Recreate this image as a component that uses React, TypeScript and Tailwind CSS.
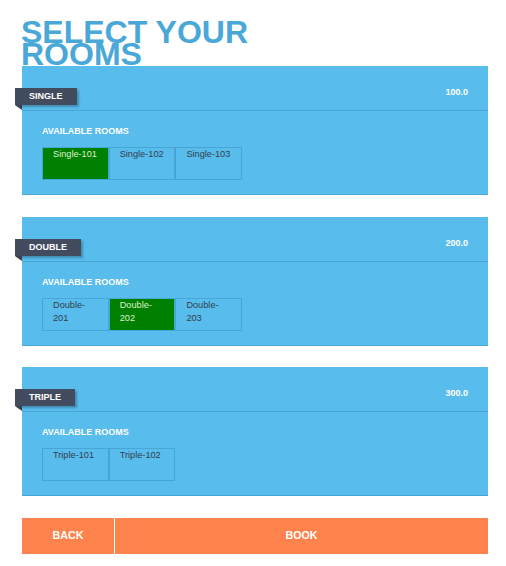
import React from "react";

type Room = { name: string; selected?: boolean };
type Cat = { tag: string; price: string; rooms: Room[] };

const cats: Cat[] = [
  {
    tag: "SINGLE",
    price: "100.0",
    rooms: [{ name: "Single-101", selected: true }, { name: "Single-102" }, { name: "Single-103" }],
  },
  {
    tag: "DOUBLE",
    price: "200.0",
    rooms: [{ name: "Double-201" }, { name: "Double-202", selected: true }, { name: "Double-203" }],
  },
  {
    tag: "TRIPLE",
    price: "300.0",
    rooms: [{ name: "Triple-101" }, { name: "Triple-102" }],
  },
];

function Panel({ cat }: { cat: Cat }) {
  return (
    <div className="bg-[#58bcec] border-b border-[#47a6d6] mb-[21.5px]">
      <div className="relative h-[45px] border-b border-[#47a6d6] flex justify-end">
        <div className="absolute left-[-7px] top-[22px]">
          <div className="h-[17px] px-[14px] flex items-center bg-[#434c5e] text-white font-bold text-[9px] leading-none shadow-[2px_2px_2px_rgba(0,0,0,0.25)]">
            {cat.tag}
          </div>
          <div className="w-0 h-0 border-t-[5px] border-t-[#39404f] border-l-[7px] border-l-transparent" />
        </div>
        <div className="pt-[20px] pr-[20px] text-white font-bold text-[9px] leading-[12px]">{cat.price}</div>
      </div>
      <div className="pl-[20px] pt-[14px] pb-[14px]">
        <div className="text-white font-bold text-[9px] leading-[12px] mb-[10px]">AVAILABLE ROOMS</div>
        <div className="flex">
          {cat.rooms.map((r) => (
            <div
              key={r.name}
              className={
                "w-[66.7px] h-[33px] border pl-[10px] pr-[9.5px] text-[9.2px] leading-[13px] " +
                (r.selected
                  ? "bg-[#008000] border-[#47a6d6] text-[#dff0cc]"
                  : "border-[#47a6d6] text-[#33404d]")
              }
            >
              {r.name}
            </div>
          ))}
        </div>
      </div>
    </div>
  );
}

export default function App() {
  return (
    <div
      className="w-[506px] min-h-[566px] bg-white"
      style={{ fontFamily: '"Liberation Sans", Arial, sans-serif' }}
    >
      <div className="ml-[22px] w-[466px] pt-[21px]">
        <h1 className="text-[32px] leading-[22px] font-bold text-[#4aa8d8] mb-[1px] -ml-[1px]">
          SELECT YOUR
          <br />
          ROOMS
        </h1>
        {cats.map((c) => (
          <Panel key={c.tag} cat={c} />
        ))}
        <div className="flex h-[36px] mt-[1px]">
          <button className="w-[92px] bg-[#ff834d] text-white font-bold text-[10.7px]">BACK</button>
          <div className="w-[1px] bg-white" />
          <button className="flex-1 bg-[#ff834d] text-white font-bold text-[10.7px]">BOOK</button>
        </div>
      </div>
    </div>
  );
}
